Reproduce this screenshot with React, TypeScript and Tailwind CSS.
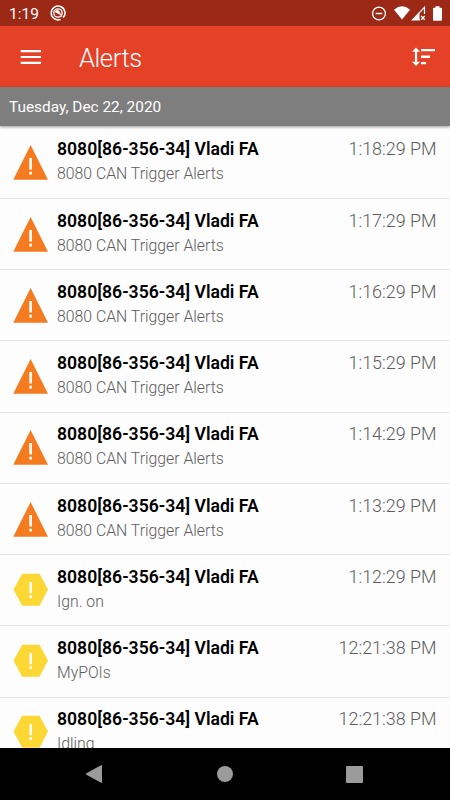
import React from "react";

type Alert = {
  level: "high" | "medium";
  message: string;
  time: string;
};

const alerts: Alert[] = [
  { level: "high", message: "8080 CAN Trigger Alerts", time: "1:18:29 PM" },
  { level: "high", message: "8080 CAN Trigger Alerts", time: "1:17:29 PM" },
  { level: "high", message: "8080 CAN Trigger Alerts", time: "1:16:29 PM" },
  { level: "high", message: "8080 CAN Trigger Alerts", time: "1:15:29 PM" },
  { level: "high", message: "8080 CAN Trigger Alerts", time: "1:14:29 PM" },
  { level: "high", message: "8080 CAN Trigger Alerts", time: "1:13:29 PM" },
  { level: "medium", message: "Ign. on", time: "1:12:29 PM" },
  { level: "medium", message: "MyPOIs", time: "12:21:38 PM" },
  { level: "medium", message: "Idling", time: "12:21:38 PM" },
];

const AlertIcon = ({ level }: { level: Alert["level"] }) => (
  <svg className="w-[35px] h-[35px] shrink-0" viewBox="0 0 35 35">
    {level === "high" ? (
      <path d="M17.6 0L35 34.7H0.3Z" fill="#f47b20" />
    ) : (
      <path d="M9.2 0.8H26.5L35 16.6L26.5 32.8H9.2L0.5 16.6Z" fill="#fdd835" />
    )}
    {level === "high" ? (
      <path d="M16.3 13h2.6v11.5h-2.6zM16.3 26.8h2.6v2.7h-2.6z" fill="#fff" />
    ) : (
      <path d="M16.5 9h2.5v11.2h-2.5zM16.5 22.2h2.5v2.7h-2.5z" fill="#fff" />
    )}
  </svg>
);

const StatusBar = () => (
  <div className="flex items-center h-[26px] shrink-0 bg-[#9c2816] pl-[9px] pr-[8px] text-white">
    <span className="text-[15.5px] leading-[26px] pt-[2px]">1:19</span>
    <svg className="w-4 h-4 ml-[11px]" viewBox="0 0 16 16" fill="none" stroke="currentColor">
      <path d="M10.6 14.4A6.9 6.9 0 1 1 13.2 12.6" strokeWidth="1.5" />
      <circle cx="8" cy="8" r="4.2" strokeWidth="1.3" />
      <path d="M5 6.7Q6.4 4.7 8.5 5.5L12 11.6Q9.5 8.2 7.5 8.2Z" fill="currentColor" strokeWidth="0.6" />
    </svg>
    <div className="flex-1" />
    <svg className="w-[15px] h-[15px]" viewBox="0 0 15 15" fill="none" stroke="currentColor">
      <circle cx="7" cy="7.5" r="6.4" strokeWidth="1.3" />
      <path d="M3.7 7.5h6.6" strokeWidth="1.5" />
    </svg>
    <svg className="w-[16px] h-[14px] ml-[7px]" viewBox="0 0 16 14" fill="currentColor">
      <path d="M0 3.7Q8-3 16 3.7L8 13.5Z" />
    </svg>
    <svg className="w-[15px] h-[15px] ml-px" viewBox="0 0 15 15" fill="none" stroke="currentColor">
      <path d="M13.5 8V1.3L1.4 13.8H9" strokeWidth="1.2" />
      <path d="M8.5 7V14H1.5Z" fill="currentColor" stroke="none" />
      <path d="M10.2 10l3.5 3.7M13.7 10l-3.5 3.7" strokeWidth="1.3" />
    </svg>
    <svg className="w-[9px] h-[15px] ml-[7px]" viewBox="0 0 9 15" fill="currentColor">
      <path d="M2.5 0.3h4v1.5h1.6q.9 0 .9.9v11q0 1-1 1H1q-1 0-1-1v-11q0-.9.9-.9h1.6z" />
    </svg>
  </div>
);

const AppBar = () => (
  <header className="flex items-center h-[61px] shrink-0 bg-[#e54127] pl-[20px] pr-[15px] text-white">
    <svg className="w-[22px] h-[16px]" viewBox="0 0 22 16" stroke="currentColor">
      <path d="M0.7 2.2h20.3M0.7 8h20.3M0.7 13.8h20.3" strokeWidth="2.2" />
    </svg>
    <h1 className="flex-1 pl-[37px] pt-[3px] text-[25.5px] font-light leading-8 tracking-[-0.4px]">Alerts</h1>
    <svg className="w-[24px] h-[20px]" viewBox="0 0 24 20" fill="currentColor">
      <path d="M5 0.5L9 4.8H6.1V14.8H9L5 19L1 14.8H3.9V4.8H1Z" />
      <path d="M10 2h14v2.2H10zM10 8.6h9v2.3h-9zM10 15.1h5v2.2h-5z" />
    </svg>
  </header>
);

const AlertRow = ({ alert }: { alert: Alert }) => (
  <li className="flex h-[71.25px] shrink-0 border-b border-[#e3e3e3] pl-[13px] pr-[13.5px]">
    <div className="pt-[17.9px]">
      <AlertIcon level={alert.level} />
    </div>
    <div className="flex-1 pl-[9px] pt-[9.7px]">
      <div className="flex justify-between leading-6">
        <span className="text-[17.6px] font-semibold text-black">8080[86-356-34] Vladi FA</span>
        <span className="text-[17.9px] font-light text-[#5c5c5c]">{alert.time}</span>
      </div>
      <div className="pt-[1px] text-[15.8px] font-light leading-6 text-[#5c5c5c]">{alert.message}</div>
    </div>
  </li>
);

const NavigationBar = () => (
  <nav className="flex items-center h-[52px] shrink-0 bg-black pl-[85px] pr-[87px] justify-between text-[#9b9b9b]">
    <svg className="w-[18px] h-[18px]" viewBox="0 0 18 18" fill="currentColor">
      <path d="M16 .2q1-.4 1 .6V17.2q0 1-1 .6L1.5 9.8q-1-.8 0-1.5Z" />
    </svg>
    <div className="w-4 h-4 rounded-full bg-[#9b9b9b]" />
    <div className="w-[17px] h-[17px] rounded-[1px] bg-[#9b9b9b]" />
  </nav>
);

export default function App() {
  return (
    <div className="flex flex-col w-full h-screen overflow-hidden bg-[#fdfdfd] font-['Roboto',sans-serif]">
      <StatusBar />
      <AppBar />
      <div className="relative h-[39px] shrink-0 bg-[#7e7e7e] pl-[9px] text-[15.4px] leading-[41px] text-white shadow-[0_1px_3px_rgba(0,0,0,0.4)]">
        Tuesday, Dec 22, 2020
      </div>
      <ul className="flex flex-col flex-1 min-h-0 pt-[1.6px] overflow-hidden">
        {alerts.map((alert, i) => (
          <AlertRow key={i} alert={alert} />
        ))}
      </ul>
      <NavigationBar />
    </div>
  );
}
